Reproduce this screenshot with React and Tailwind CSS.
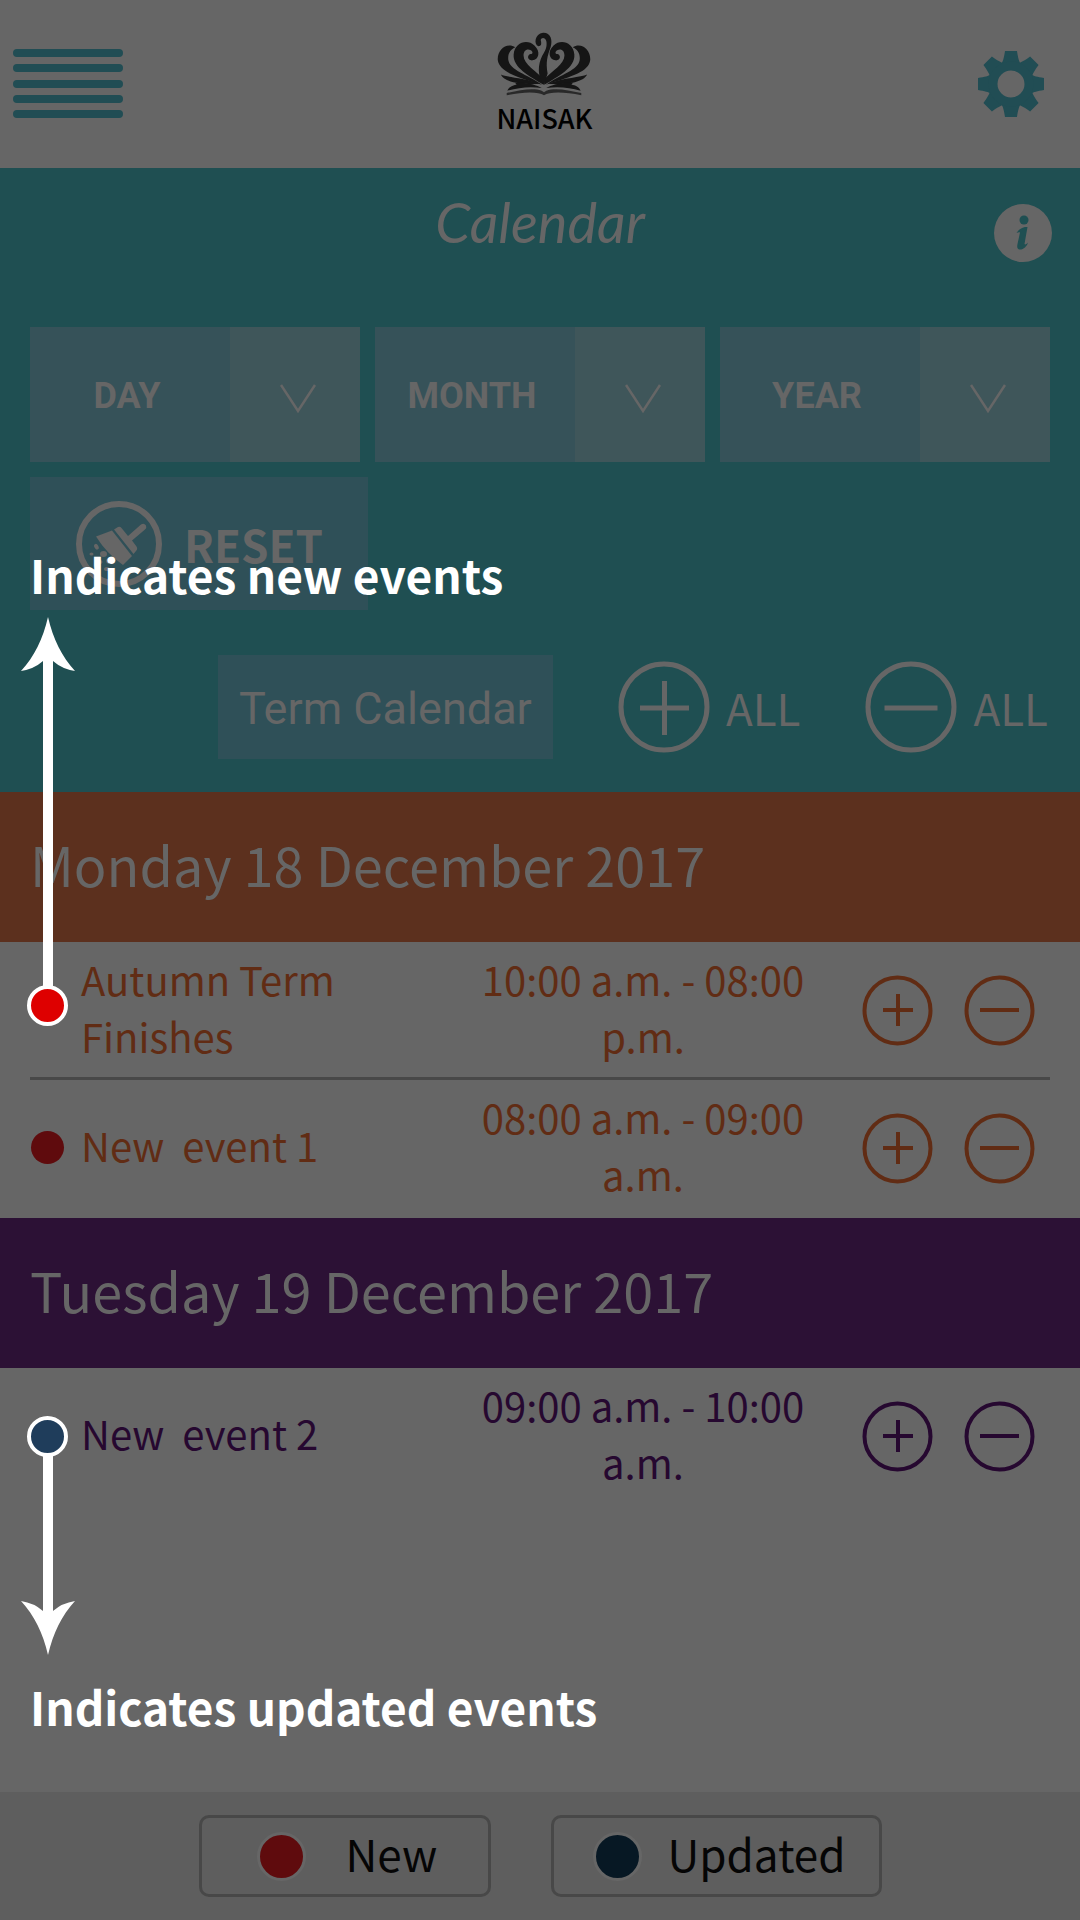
import React from "react";

function MenuIcon() {
  return (
    <svg viewBox="0 0 110 70" className="h-[70px] w-[110px]" fill="#214d54" aria-hidden="true">
      {[0, 15, 31, 46, 61].map((y) => (
        <rect key={y} x="0" y={y} width="110" height="8" rx="4" />
      ))}
    </svg>
  );
}

function GearIcon() {
  return (
    <svg viewBox="-33 -33 66 66" className="size-[66px]" fill="#214d54" aria-hidden="true">
      {[0, 45, 90, 135, 180, 225, 270, 315].map((a) => (
        <path key={a} transform={`rotate(${a})`} d="M-10 -19 C-8 -23 -7 -26 -6 -33 L6 -33 C7 -26 8 -23 10 -19Z" />
      ))}
      <circle r="18" fill="none" stroke="#214d54" strokeWidth="9" />
    </svg>
  );
}

function Crest() {
  const half = (
    <>
      <path d="M106 80C78 64 50 90 53 120C58 154 104 168 187 194C140 162 90 150 85 120C82 98 92 87 106 80Z" />
      <path d="M192 194C150 168 98 142 101 102C104 66 142 54 164 75C184 94 177 118 158 120C142 121 141 104 152 101C160 100 160 93 153 89C141 83 131 90 131 105C131 132 170 152 193 178Z" />
      <path d="M62 163C82 172 130 172 182 191C145 194 76 192 62 163Z" />
      <path d="M82 212C86 200 98 196 110 193L105 188C138 186 172 194 186 204C152 198 116 202 82 212Z" />
      <path d="M80 219C120 210 160 202 186 212L193 217L193 226C176 214 130 215 80 226Z" opacity=".75" />
    </>
  );
  return (
    <svg viewBox="52 34 282 194" className="h-[64px] w-[94px]" fill="#151515" aria-hidden="true">
      {half}
      <g transform="matrix(-1 0 0 1 386 0)">{half}</g>
      <path d="M193 194C172 168 174 132 188 105C199 88 203 75 200 61C197 50 185 49 183 58C185 65 187 77 176 77C161 72 165 39 190 36C213 35 220 58 213 80C203 108 198 124 204 160Z" />
    </svg>
  );
}

function InfoIcon() {
  return (
    <svg viewBox="0 0 58 58" className="size-[58px]" aria-hidden="true">
      <circle cx="29" cy="29" r="29" fill="#666" />
      <circle cx="30" cy="16" r="4.5" fill="#1f4f52" />
      <path d="M22.500 29C25 25 29 22.500 33.500 23L30.500 40C31 41 33 40 34 38.500C33 42.500 29 46 25.500 45.500C23 45 23 42.500 23.500 40L26 28.500C25 28 24 28.500 22.500 29Z" fill="#1f4f52" />
    </svg>
  );
}

function BrushIcon() {
  return (
    <svg viewBox="0 0 86 86" className="size-[86px]" fill="#666" aria-hidden="true">
      <circle cx="43" cy="43" r="40" fill="none" stroke="#666" strokeWidth="6" />
      <path d="M20 35.500L36 29.500L56 55L47 64Q31 53 20 35.500Z" />
      <path d="M38 28.500L42 26Q44 25 45.500 27L52 35L65 23.500Q68 21.500 70 24.500Q71 27 69 28.500L56 39.500L60.500 45.500Q62 48 60 50L57.500 53Z" />
      <ellipse cx="20.500" cy="46" rx="2" ry="3" transform="rotate(-30 20 46)" />
      <ellipse cx="27.500" cy="53" rx="3.500" ry="3" />
      <ellipse cx="15.500" cy="53" rx="2" ry="1.500" />
      <ellipse cx="24" cy="61" rx="2.500" ry="2" />
      <ellipse cx="34" cy="60" rx="4" ry="3" />
      <ellipse cx="31" cy="68" rx="3" ry="2" />
    </svg>
  );
}

function AllButton({ minus }) {
  return (
    <button
      type="button"
      className="flex items-center gap-[16px] font-['Noto_Sans_CJK_SC',sans-serif] text-[44px] leading-[64px]"
    >
      <svg viewBox="0 0 92 92" className="size-[92px]" fill="none" stroke="#666" strokeWidth="5" aria-hidden="true">
        <circle cx="46" cy="46" r="43" />
        <path d={minus ? "M19.500 47H72.500" : "M22 47H71M46.500 20V74"} />
      </svg>
      <span>ALL</span>
    </button>
  );
}

function SignButton({ minus, label }) {
  return (
    <button type="button" aria-label={label} className="size-[71px]">
      <svg viewBox="0 0 71 71" className="size-full" fill="none" stroke="currentColor" strokeWidth="4" aria-hidden="true">
        <circle cx="35.500" cy="35.500" r="33" />
        <path d={minus ? "M16 35H55" : "M21 35H51M36 19V51"} />
      </svg>
    </button>
  );
}

function Arrow({ length, down }) {
  return (
    <svg
      width="56"
      height={length}
      viewBox={`0 0 56 ${length}`}
      className={down ? "-ml-[10px] block rotate-180" : "-ml-[10px] block"}
      fill="#fff"
      aria-hidden="true"
    >
      <path d={`M28 0C33 22 42 40 55 54Q42 52 33 44V${length}H23V44Q14 52 1 54C14 40 23 22 28 0Z`} />
    </svg>
  );
}

function CalloutDot({ color }) {
  return <span className={`-ml-[3px] block size-[41px] rounded-full border-4 border-white ${color}`} />;
}

function CalloutText({ children }) {
  return <p className="text-[46px] leading-[57px] font-bold whitespace-nowrap text-white">{children}</p>;
}

function Picker({ label, options }) {
  return (
    <div className="relative">
      <select
        aria-label={label}
        className="block h-[135px] w-full appearance-none bg-[#365259] pt-0.5 pr-[136px] text-center font-[Roboto,sans-serif] text-[36px] font-bold text-[#666]"
      >
        <option>{label}</option>
        {options.map((o) => (
          <option key={o}>{o}</option>
        ))}
      </select>
      <span className="pointer-events-none absolute inset-y-0 right-0 flex w-[130px] items-center justify-center bg-[#3f565a] pl-1.5">
        <svg viewBox="0 0 36 30" className="mt-2 h-[30px] w-[36px]" fill="none" stroke="#666" strokeWidth="2.500" aria-hidden="true">
          <path d="M1 1L18 27L35 1" />
        </svg>
      </span>
    </div>
  );
}

function DayHeading({ color, children }) {
  return (
    <h2 className={`flex h-[150px] items-center px-[30px] pb-1.5 text-[54px] leading-[76px] text-[#666] ${color}`}>
      {children}
    </h2>
  );
}

function EventRow({ title, time, dot, color, divider, callout }) {
  return (
    <li
      className={`relative mx-[30px] flex min-h-[138px] items-center border-b-3 pr-[15px] ${color} ${
        divider ? "border-[#484848]" : "border-transparent"
      }`}
    >
      <span className={`ml-px size-[33px] shrink-0 rounded-full ${dot}`} />
      <span className="ml-[17px] flex-1 pb-1 text-[40px] leading-[57px] whitespace-pre-wrap">{title}</span>
      <time className="mr-[34px] w-[370px] pb-1 text-center text-[40px] leading-[57px]">{time}</time>
      <span className="flex gap-[31px] pt-0.5">
        <SignButton label={`Add ${title}`} />
        <SignButton minus label={`Remove ${title}`} />
      </span>
      {callout}
    </li>
  );
}

function LegendButton({ dot, children, className }) {
  return (
    <button
      type="button"
      className={`flex h-[82px] items-center rounded-[10px] border-3 border-[#484848] text-[44px] leading-[64px] text-[#050505] ${className}`}
    >
      <span className={`size-[49px] rounded-full border-3 border-[#666] ${dot}`} />
      <span className="pb-1.5">{children}</span>
    </button>
  );
}

export default function App() {
  return (
    <div className="flex min-h-screen flex-col bg-[#666] font-['Noto_Sans_CJK_SC',sans-serif]">
      <header className="grid h-[168px] grid-cols-3 items-center pr-[36px] pl-[13px]">
        <button type="button" aria-label="Menu" className="justify-self-start">
          <MenuIcon />
        </button>
        <div className="flex flex-col items-center justify-self-center pt-1 pl-8">
          <Crest />
          <span className="text-[27px] leading-[44px] font-medium text-black">NAISAK</span>
        </div>
        <button type="button" aria-label="Settings" className="justify-self-end">
          <GearIcon />
        </button>
      </header>

      <section className="bg-[#1f4f52] px-[30px] pb-[33px] text-[#666]">
        <div className="relative flex h-[159px] justify-center pt-[16px]">
          <h1 className="font-[Lato,cursive] text-[56px] leading-[76px] font-normal italic">Calendar</h1>
          <button type="button" aria-label="Information" className="absolute top-[36px] right-[-2px]">
            <InfoIcon />
          </button>
        </div>
        <div className="grid grid-cols-3 gap-[15px]">
          <Picker label="DAY" options={["18", "19"]} />
          <Picker label="MONTH" options={["December"]} />
          <Picker label="YEAR" options={["2017"]} />
        </div>
        <button
          type="button"
          className="mt-[15px] flex h-[133px] w-[338px] items-center gap-[22px] bg-[#2f5058] pl-[46px] text-[44px] font-bold"
        >
          <BrushIcon />
          <span>RESET</span>
        </button>
        <div className="mt-[45px] flex items-center justify-end gap-[65px] pr-[2px]">
          <button type="button" className="h-[104px] w-[335px] bg-[#2f5058] pt-1 font-[Roboto,sans-serif] text-[45px]">
            Term Calendar
          </button>
          <AllButton />
          <AllButton minus />
        </div>
      </section>

      <main className="flex-1">
        <DayHeading color="bg-[#5c301e]">Monday 18 December 2017</DayHeading>
        <ul>
          <EventRow
            title="Autumn Term Finishes"
            time="10:00 a.m. - 08:00 p.m."
            dot="bg-transparent"
            color="text-[#612c14]"
            divider
            callout={
              <div className="absolute bottom-[51px] left-0">
                <CalloutText>Indicates new events</CalloutText>
                <div className="mt-[14px]">
                  <Arrow length={370} />
                  <div className="-mt-0.5">
                    <CalloutDot color="bg-[#de0000]" />
                  </div>
                </div>
              </div>
            }
          />
          <EventRow title="New  event 1" time="08:00 a.m. - 09:00 a.m." dot="bg-[#5f0b0d]" color="text-[#612c14]" />
        </ul>
        <DayHeading color="bg-[#2c1135]">Tuesday 19 December 2017</DayHeading>
        <ul>
          <EventRow
            title="New  event 2"
            time="09:00 a.m. - 10:00 a.m."
            dot="bg-transparent"
            color="text-[#260830]"
            callout={
              <div className="absolute top-[48px] left-0">
                <CalloutDot color="bg-[#1f3d5b]" />
                <div className="-mt-0.5">
                  <Arrow length={200} down />
                </div>
                <div className="mt-[23px]">
                  <CalloutText>Indicates updated events</CalloutText>
                </div>
              </div>
            }
          />
        </ul>
      </main>

      <footer className="flex h-[128px] items-center justify-center gap-[60px] bg-[#5e5e5e]">
        <LegendButton dot="bg-[#5f0b0d]" className="w-[292px] gap-[40px] pl-[55px]">
          New
        </LegendButton>
        <LegendButton dot="bg-[#071824]" className="w-[331px] gap-[26px] pl-[39px]">
          Updated
        </LegendButton>
      </footer>
    </div>
  );
}
